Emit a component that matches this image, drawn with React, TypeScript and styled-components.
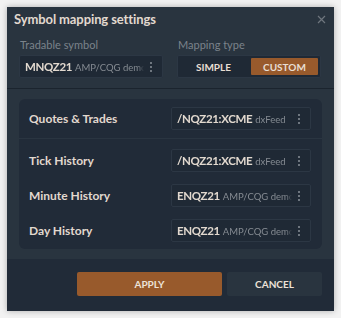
import React from "react";
import styled, { createGlobalStyle } from "styled-components";

const GlobalStyle = createGlobalStyle`
  html, body {
    margin: 0;
    padding: 0;
    background: #f2f2f2;
  }
  body {
    font-family: Lato, "Open Sans", sans-serif;
    -webkit-font-smoothing: antialiased;
  }
`;

const Dialog = styled.div`
  margin: 7px;
  width: 327px;
  height: 304px;
  background: #29343f;
  box-shadow: 0 0 6px rgba(0, 0, 0, 0.28);
  display: flex;
  flex-direction: column;
  color: #e2d9cf;
`;

const Header = styled.div`
  border-bottom: 1px solid #1b242e;
`;

const TitleRow = styled.div`
  height: 24px;
  display: flex;
  align-items: center;
  justify-content: space-between;
  padding: 0 8px 0 7px;
`;

const Title = styled.div`
  font-size: 13px;
  font-weight: 700;
  letter-spacing: -0.1px;
`;

const Close = styled.div`
  width: 10px;
  height: 10px;
  display: flex;
  align-items: center;
  justify-content: center;
`;

const Fields = styled.div`
  display: grid;
  grid-template-columns: 144px 144px;
  column-gap: 14px;
  padding: 7px 12px 10px;
`;

const Field = styled.div`
  display: flex;
  flex-direction: column;
  gap: 4px;
`;

const Label = styled.div`
  font-size: 11px;
  color: #7b838b;
  height: 13px;
  line-height: 13px;
  padding-left: 1px;
`;

const Box = styled.div<{ $width?: number }>`
  box-sizing: border-box;
  height: 23px;
  flex: none;
  width: ${(p) => (p.$width ? `${p.$width}px` : "auto")};
  background: #1f2935;
  border: 1px solid #2c3744;
  border-radius: 2px;
  display: flex;
  align-items: center;
  padding: 0 9px 0 5px;
  gap: 5px;
`;

const SymbolText = styled.div`
  flex: 1;
  min-width: 0;
  white-space: nowrap;
  overflow: hidden;
  display: flex;
  align-items: baseline;
  gap: 3px;
  -webkit-mask-image: linear-gradient(
    to right,
    #000 calc(100% - 6px),
    transparent 100%
  );
`;

const Symbol = styled.span`
  font-size: 11.5px;
  font-weight: 700;
  letter-spacing: -0.35px;
  color: #e2d9cf;
`;

const Source = styled.span`
  font-size: 9.5px;
  color: #858b92;
`;

const Toggle = styled.div`
  box-sizing: border-box;
  height: 23px;
  background: #1f2935;
  border: 1px solid #2c3744;
  border-radius: 2px;
  padding: 2px;
  display: grid;
  grid-template-columns: 1fr 1fr;
  column-gap: 4px;
`;

const Segment = styled.div<{ $active?: boolean }>`
  display: flex;
  align-items: center;
  justify-content: center;
  font-size: 10px;
  font-weight: 700;
  color: #e8ded3;
  background: ${(p) => (p.$active ? "#985a2c" : "transparent")};
  border-radius: 1px;
`;

const Body = styled.div`
  padding: 10px 12px;
`;

const Panel = styled.div`
  background: #212b38;
  border-radius: 6px;
  display: flex;
  flex-direction: column;
`;

const Section = styled.div<{ $first?: boolean }>`
  display: flex;
  flex-direction: column;
  gap: 12px;
  padding: ${(p) => (p.$first ? "8px 11px 8px 10px" : "10px 11px 7px 10px")};
  border-bottom: ${(p) => (p.$first ? "1px solid #2a3541" : "none")};
`;

const Row = styled.div`
  display: flex;
  align-items: center;
  justify-content: space-between;
  height: 23px;
`;

const RowLabel = styled.div`
  font-size: 12px;
  font-weight: 700;
  color: #e2d9cf;
`;

const Footer = styled.div`
  flex: 1;
  background: #212b38;
  display: flex;
  justify-content: flex-end;
  gap: 5px;
  padding: 13px 12px 0;
`;

const Button = styled.button<{ $primary?: boolean; $width: number }>`
  width: ${(p) => p.$width}px;
  height: 24px;
  border: none;
  border-radius: 2px;
  background: ${(p) => (p.$primary ? "#985a2c" : "#29343f")};
  color: #ece2d8;
  font-family: Lato, sans-serif;
  font-size: 10px;
  font-weight: 700;
  cursor: pointer;
`;

const Kebab = () => (
  <svg width="4" height="12" viewBox="0 0 4 12" style={{ flex: "none" }}>
    <circle cx="2" cy="2" r="1" fill="#8a9098" />
    <circle cx="2" cy="6" r="1" fill="#8a9098" />
    <circle cx="2" cy="10" r="1" fill="#8a9098" />
  </svg>
);

const mappings = [
  { name: "Quotes & Trades", symbol: "/NQZ21:XCME", source: "dxFeed" },
  { name: "Tick History", symbol: "/NQZ21:XCME", source: "dxFeed" },
  { name: "Minute History", symbol: "ENQZ21", source: "AMP/CQG demo" },
  { name: "Day History", symbol: "ENQZ21", source: "AMP/CQG demo" },
];

const MappingRow = ({ m }: { m: (typeof mappings)[number] }) => (
  <Row>
    <RowLabel>{m.name}</RowLabel>
    <Box $width={140}>
      <SymbolText>
        <Symbol>{m.symbol}</Symbol>
        <Source>{m.source}</Source>
      </SymbolText>
      <Kebab />
    </Box>
  </Row>
);

export default function App() {
  return (
    <>
      <GlobalStyle />
      <Dialog>
        <Header>
          <TitleRow>
            <Title>Symbol mapping settings</Title>
            <Close>
              <svg width="9" height="9" viewBox="0 0 9 9">
                <path d="M1 1L8 8M8 1L1 8" stroke="#6e757d" strokeWidth="1.2" />
              </svg>
            </Close>
          </TitleRow>
          <Fields>
            <Field>
              <Label>Tradable symbol</Label>
              <Box>
                <SymbolText>
                  <Symbol>MNQZ21</Symbol>
                  <Source>AMP/CQG demo</Source>
                </SymbolText>
                <Kebab />
              </Box>
            </Field>
            <Field>
              <Label>Mapping type</Label>
              <Toggle>
                <Segment>SIMPLE</Segment>
                <Segment $active>CUSTOM</Segment>
              </Toggle>
            </Field>
          </Fields>
        </Header>
        <Body>
          <Panel>
            <Section $first>
              <MappingRow m={mappings[0]} />
            </Section>
            <Section>
              {mappings.slice(1).map((m) => (
                <MappingRow key={m.name} m={m} />
              ))}
            </Section>
          </Panel>
        </Body>
        <Footer>
          <Button $primary $width={145}>APPLY</Button>
          <Button $width={95}>CANCEL</Button>
        </Footer>
      </Dialog>
    </>
  );
}
